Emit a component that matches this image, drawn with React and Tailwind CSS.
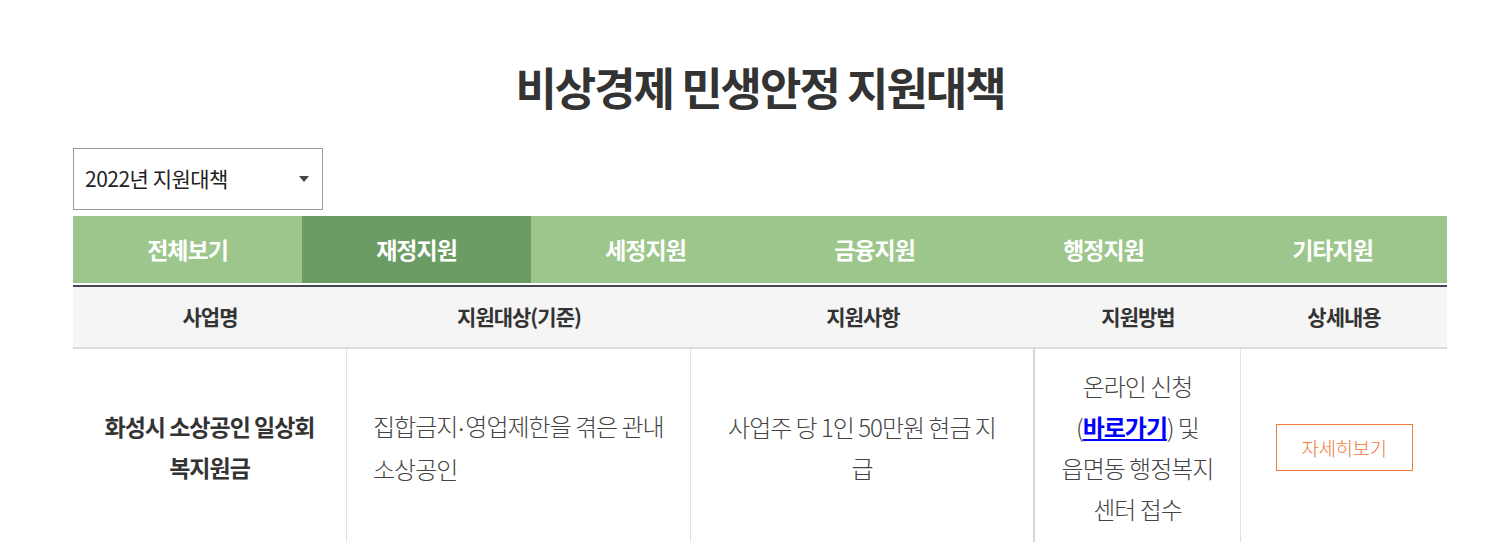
import { useState } from 'react';

const tabs = ['전체보기', '재정지원', '세정지원', '금융지원', '행정지원', '기타지원'];
const heads = ['사업명', '지원대상(기준)', '지원사항', '지원방법', '상세내용'];

export default function App() {
    const [active, setActive] = useState(1);

    return (
        <div className="min-h-screen bg-white text-[#333]" style={{ fontFamily: '"Noto Sans CJK KR", "Noto Sans", sans-serif' }}>
            <div className="w-[1374px] ml-[73px] pt-[56px]">
                {/* 제목 */}
                <h1 className="text-center text-[45px] font-bold leading-[62px] tracking-[-2px] text-[#333]">
                    비상경제 민생안정 지원대책
                </h1>

                {/* 연도 선택 */}
                <div className="mt-[30px] w-[250px] h-[62px] border border-[#999] flex items-center justify-between pl-[11px] pr-[13px]">
                    <span className="text-[21px] tracking-[-0.5px] text-[#222]">2022년 지원대책</span>
                    <span className="w-0 h-0 border-l-[5px] border-r-[5px] border-t-[6px] border-l-transparent border-r-transparent border-t-[#444]" />
                </div>

                {/* 탭 */}
                <div className="mt-[6px] grid grid-cols-6 h-[67px] bg-[#9cc68b]">
                    {tabs.map((t, i) => (
                        <button
                            key={t}
                            onClick={() => setActive(i)}
                            className={`flex items-center justify-center text-white text-[23px] font-bold tracking-[-1px] ${i === active ? 'bg-[#6a9c64]' : 'bg-[#9cc68b]'}`}
                        >
                            {t}
                        </button>
                    ))}
                </div>

                {/* 표 */}
                <div className="mt-[2px] border-t-2 border-[#43454f]">
                    <div className="grid grid-cols-[274px_344px_344px_206px_206px] h-[62px] bg-[#f5f5f5] border-b-2 border-[#dcdcdc]">
                        {heads.map((h) => (
                            <div key={h} className="flex items-center justify-center text-[21px] font-bold tracking-[-1px] text-[#333]">
                                {h}
                            </div>
                        ))}
                    </div>
                    <div className="grid grid-cols-[274px_344px_344px_206px_206px] text-[24px] leading-[41px] tracking-[-1px] text-[#444]">
                        <div className="flex items-center justify-center text-center font-bold text-[#333] text-[23px] px-4 py-4 border-r border-[#e2e2e2]">
                            <p>화성시 소상공인 일상회<br />복지원금</p>
                        </div>
                        <div className="flex items-center px-[26px] py-4 border-r border-[#e2e2e2] font-light">
                            <p>
                                집합금지<span style={{ fontFamily: '"Liberation Sans", sans-serif', letterSpacing: 0 }}>·</span>영업제한을 겪은 관내<br />
                                소상공인
                            </p>
                        </div>
                        <div className="flex items-center justify-center text-center px-[34px] py-4 border-r-2 border-[#d6d6d6] font-light">
                            <p>사업주 당 1인 50만원 현금 지급</p>
                        </div>
                        <div className="flex items-center justify-center text-center px-4 py-4 border-r border-[#e2e2e2] font-light">
                            <p>
                                온라인 신청<br />
                                (<a href="#" className="text-[#0000ff] font-bold underline">바로가기</a>) 및<br />
                                읍면동 행정복지<br />
                                센터 접수
                            </p>
                        </div>
                        <div className="flex items-center justify-center py-4">
                            <a href="#" className="w-[137px] h-[47px] border border-[#f07a3a] text-[#f07a3a] text-[19px] tracking-[-0.5px] font-light flex items-center justify-center">
                                자세히보기
                            </a>
                        </div>
                    </div>
                </div>
            </div>
        </div>
    );
}
